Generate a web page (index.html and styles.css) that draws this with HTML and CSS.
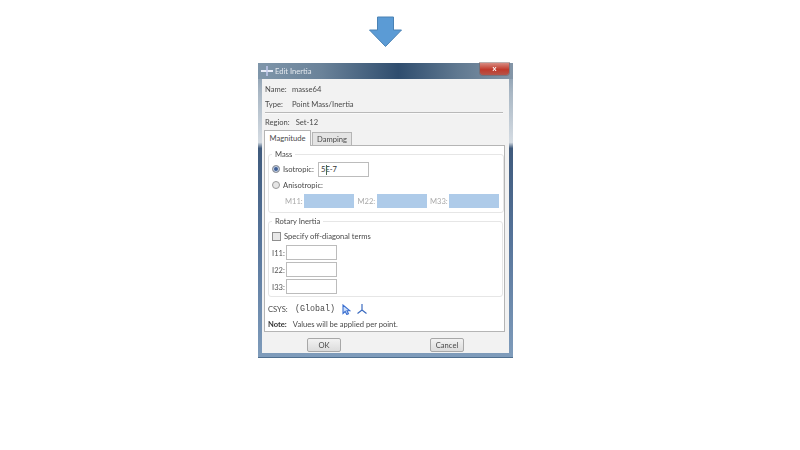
FILE: index.html
```html
<!DOCTYPE html>
<html lang="en">
<head>
    <meta charset="UTF-8">
    <meta name="viewport" content="width=device-width, initial-scale=1.0">
    <title>Edit Inertia</title>
    <link rel="stylesheet" href="styles.css">
</head>
<body>
    <div class="slide">
        <svg class="down-arrow" width="35" height="32" viewBox="0 0 35 32">
            <path d="M9.5 1H25.500V14H33.500L17.500 30.500L1.500 14H9.500Z" fill="#5b9bd5" stroke="#4a82b4" stroke-width="1"/>
        </svg>

        <div class="window">
            <div class="titlebar">
                <svg class="title-icon" width="12" height="10" viewBox="0 0 12 10">
                    <path d="M0 5H12" stroke="#e8ecf8" stroke-width="2"/>
                    <path d="M6 0V10" stroke="#c3cbee" stroke-width="1.500"/>
                </svg>
                <span class="title-text">Edit Inertia</span>
                <div class="close-btn">x</div>
            </div>

            <div class="client">
                <div class="info-row"><span class="info-label">Name:</span>masse64</div>
                <div class="info-row"><span class="info-label">Type:</span>Point Mass/Inertia</div>
                <div class="separator"></div>
                <div class="info-row region-row"><span class="region-label">Region:</span>Set-12</div>

                <div class="tabs">
                    <div class="tab tab-active">Magnitude</div>
                    <div class="tab">Damping</div>
                </div>

                <div class="panel">
                    <fieldset class="group group-mass">
                        <legend>Mass</legend>
                        <div class="option-row option-iso">
                            <span class="radio radio-on"></span>
                            <span class="option-label iso-label">Isotropic:</span>
                            <div class="field field-iso">5E-7<span class="ibeam"></span></div>
                        </div>
                        <div class="option-row option-aniso">
                            <span class="radio"></span>
                            <span class="option-label">Anisotropic:</span>
                        </div>
                        <div class="matrix-row">
                            <span class="matrix-label">M11:</span><div class="matrix-field"></div>
                            <span class="matrix-label">M22:</span><div class="matrix-field"></div>
                            <span class="matrix-label">M33:</span><div class="matrix-field"></div>
                        </div>
                    </fieldset>

                    <fieldset class="group group-rotary">
                        <legend>Rotary Inertia</legend>
                        <div class="option-row option-offdiag">
                            <span class="checkbox"></span>
                            <span class="option-label">Specify off-diagonal terms</span>
                        </div>
                        <div class="inertia-row"><span class="inertia-label">I11:</span><div class="field"></div></div>
                        <div class="inertia-row"><span class="inertia-label">I22:</span><div class="field"></div></div>
                        <div class="inertia-row"><span class="inertia-label">I33:</span><div class="field"></div></div>
                    </fieldset>

                    <div class="csys-row">
                        <span class="csys-label">CSYS:</span>
                        <span class="csys-value">(Global)</span>
                        <svg class="csys-icon" width="9" height="11" viewBox="0 0 9 11">
                            <path d="M1 1V9.500L3.200 7.500L4.800 10.500L6.500 9.700L5 6.800H8Z" fill="#cfe0fa" stroke="#3a6fd0" stroke-width="1.100"/>
                        </svg>
                        <svg class="csys-icon axes-icon" width="10" height="10" viewBox="0 0 10 10">
                            <path d="M5 0V6M5 6L0.500 9.500M5 6L9.500 9.500" fill="none" stroke="#3d6cc0" stroke-width="1.200"/>
                        </svg>
                    </div>
                    <div class="note-row"><strong>Note:</strong>Values will be applied per point.</div>
                </div>

                <div class="buttons">
                    <div class="btn">OK</div>
                    <div class="btn">Cancel</div>
                </div>
            </div>
        </div>
    </div>
</body>
</html>
```

FILE: styles.css
```css
body {
    margin: 0;
    background: white;
    font-family: Lato, "Open Sans", sans-serif;
    font-size: 7.600px;
    color: #4a4a4a;
}
.slide {
    width: 771px;
    height: 450px;
    display: flex;
    flex-direction: column;
    align-items: center;
    overflow: hidden;
}
.down-arrow {
    margin-top: 16px;
    flex: none;
    filter: blur(0.4px);
}
.window {
    width: 255px;
    height: 295px;
    margin-top: 15px;
    flex: none;
    box-sizing: border-box;
    padding: 0 4px 4px;
    background: linear-gradient(#7d93a8 0%, #a9b7c4 10%, #d5dce3 27%, #3f5a7c 29%, #56749a 60%, #7f9cbb 100%);
    border-bottom: 1px solid #4f6f8f;
    display: flex;
    flex-direction: column;
    filter: blur(0.5px);
}
.titlebar {
    height: 16px;
    margin: 0 -4px;
    padding: 0 4px 0 3px;
    flex: none;
    display: flex;
    align-items: center;
    gap: 2px;
    background: linear-gradient(90deg, #7f96aa 0%, #6a8299 25%, #2f4d6e 55%, #5f7890 78%, #8496a8 100%);
}
.title-icon {
    flex: none;
}
.title-text {
    color: #e3e8ee;
}
.close-btn {
    width: 29px;
    height: 12px;
    margin-left: auto;
    margin-top: -4px;
    color: white;
    font-weight: bold;
    line-height: 10px;
    text-align: center;
    border-radius: 0 0 3px 3px;
    background: linear-gradient(#d88a80, #c0392b 55%, #b5544a);
    box-shadow: 0 0 0 1px rgba(120,90,90,0.5);
}
.client {
    flex: 1;
    background: #f2f2f2;
    padding: 0 4px 0 2px;
    display: flex;
    flex-direction: column;
}
.info-row {
    height: 15px;
    line-height: 15px;
    padding-left: 1px;
    flex: none;
    white-space: nowrap;
}
.info-row:first-child {
    margin-top: 3px;
}
.info-label {
    display: inline-block;
    width: 27px;
}
.region-label {
    margin-right: 6px;
}
.separator {
    height: 1px;
    margin: 0 2px 0 1px;
    background: #b9b9b9;
    border-bottom: 1px solid #fafafa;
    flex: none;
}
.region-row {
    margin-top: 1px;
}
.tabs {
    height: 15px;
    flex: none;
    display: flex;
    align-items: flex-end;
}
.tab {
    width: 38px;
    height: 12px;
    line-height: 12px;
    text-align: center;
    background: #e4e4e4;
    border: 1px solid #b5b5b5;
    border-bottom: none;
    margin-left: 1px;
}
.tab-active {
    width: 45px;
    height: 15px;
    line-height: 14px;
    margin-left: 0;
    margin-bottom: -1px;
    background: white;
    position: relative;
    z-index: 1;
}
.panel {
    width: 241px;
    height: 187px;
    box-sizing: border-box;
    flex: none;
    background: white;
    border: 1px solid #b5b5b5;
    padding: 3px 0 0 3px;
}
.group {
    margin: 0;
    width: 235px;
    padding: 0 0 0 3px;
    border: 1px solid #e6e6e6;
    border-radius: 3px;
    box-sizing: border-box;
}
.group legend {
    padding: 0 3px;
    line-height: 10px;
    height: 10px;
}
.group-mass {
    height: 64px;
}
.group-rotary {
    height: 81px;
    margin-top: 3px;
}
.option-row {
    display: flex;
    align-items: center;
    gap: 3px;
    height: 14px;
}
.option-iso {
    margin-top: 3px;
}
.option-aniso {
    margin-top: 2px;
}
.option-offdiag {
    margin-top: 3px;
}
.radio {
    width: 6px;
    height: 6px;
    border: 1px solid #9a9a9a;
    border-radius: 50%;
    background: #e6e6e6;
}
.radio-on {
    background: #3f5f96;
    box-shadow: inset 0 0 0 1px #cdd8ea;
}
.checkbox {
    width: 7px;
    height: 7px;
    border: 1px solid #8f8f8f;
    background: #e8e8e8;
}
.field {
    width: 49px;
    height: 13px;
    background: white;
    border: 1px solid #bcbcbc;
    line-height: 13px;
}
.iso-label {
    width: 32px;
}
.field-iso {
    position: relative;
    padding-left: 2px;
    width: 47px;
    color: #333;
}
.ibeam {
    position: absolute;
    left: 7px;
    top: 2px;
    width: 1px;
    height: 10px;
    background: #4c6a52;
}
.matrix-row {
    display: flex;
    align-items: center;
    margin-top: 2px;
    padding-left: 13px;
    color: #a9a9a9;
}
.matrix-label {
    width: 19px;
    flex: none;
}
.matrix-field {
    width: 50px;
    height: 14px;
    margin-right: 3.500px;
    flex: none;
    background: #aecbe9;
}
.inertia-row {
    display: flex;
    align-items: center;
    height: 15px;
    margin-top: 2px;
}
.inertia-label {
    width: 14px;
    color: #555;
}
.csys-row {
    display: flex;
    align-items: center;
    height: 14px;
    margin-top: 5px;
}
.csys-label {
    width: 27px;
}
.csys-value {
    font-family: "Liberation Mono", monospace;
    font-size: 8.330px;
}
.csys-icon {
    margin-left: 7px;
}
.axes-icon {
    margin-left: 6px;
}
.note-row {
    height: 14px;
    line-height: 14px;
    margin-top: 1px;
}
.note-row strong {
    margin-right: 6px;
    color: #333;
}
.buttons {
    display: flex;
    justify-content: space-between;
    padding: 6px 41px 0 43px;
}
.btn {
    width: 32px;
    height: 12px;
    line-height: 12px;
    text-align: center;
    border: 1px solid #a8a8a8;
    border-radius: 2px;
    background: linear-gradient(#f2f2f2, #dcdcdc);
}
```
